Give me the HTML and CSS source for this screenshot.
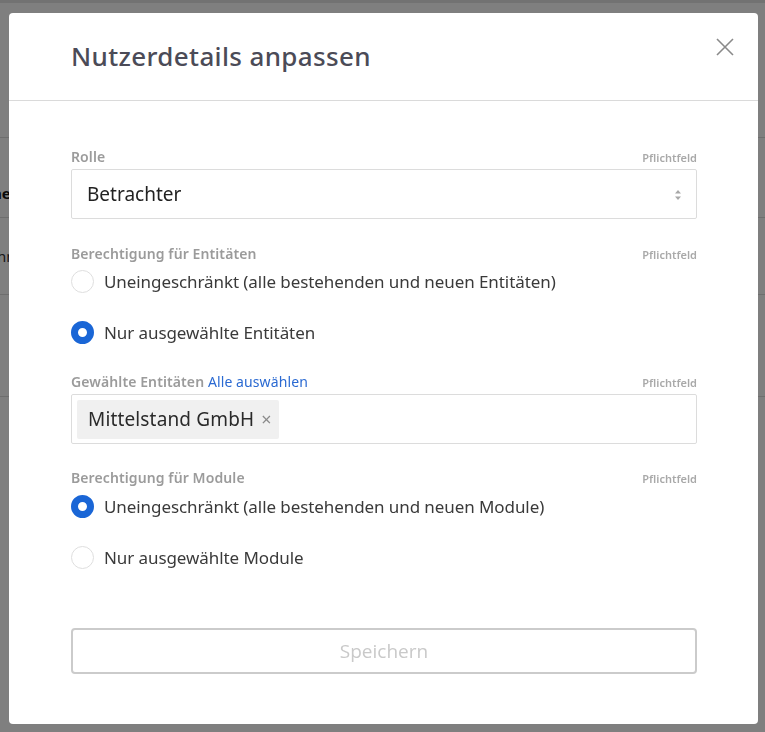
FILE: index.html
```html
<!DOCTYPE html>
<html lang="de">
<head>
<meta charset="utf-8">
<title>Nutzerdetails anpassen</title>
<link rel="stylesheet" href="styles.css">
</head>
<body>
<div class="page">
  <div class="page-top"></div>
  <div class="page-row page-row-first"></div>
  <div class="page-row page-row-head"><span class="cell-head">Name</span></div>
  <div class="page-row page-row-body"><span class="cell-body">Zahn</span></div>
  <div class="page-row page-row-tall"></div>
</div>
<div class="overlay"></div>
<div class="modal">
  <div class="modal-header">
    <h1 class="modal-title">Nutzerdetails anpassen</h1>
    <button class="close-btn" aria-label="Schließen">
      <svg width="18" height="18" viewBox="0 0 18 18"><path d="M1 1 L17 17 M17 1 L1 17" stroke="#8a8a8a" stroke-width="1.6" fill="none"/></svg>
    </button>
  </div>
  <div class="modal-body">
    <div class="field field-role">
      <div class="label-row"><span class="label">Rolle</span><span class="required">Pflichtfeld</span></div>
      <div class="box select-box">
        <span class="select-value">Betrachter</span>
        <svg class="select-arrows" width="8" height="12" viewBox="0 0 8 12"><path d="M4 1 L7 4.5 L1 4.5 Z M1 7.5 L7 7.5 L4 11 Z" fill="#a8a8a8"/></svg>
      </div>
    </div>

    <div class="field field-ent">
      <div class="label-row"><span class="label">Berechtigung für Entitäten</span><span class="required">Pflichtfeld</span></div>
      <div class="radios">
        <label class="radio-row"><span class="radio"></span><span class="radio-text">Uneingeschränkt (alle bestehenden und neuen Entitäten)</span></label>
        <label class="radio-row"><span class="radio radio-checked"></span><span class="radio-text">Nur ausgewählte Entitäten</span></label>
      </div>
    </div>

    <div class="field field-sel">
      <div class="label-row"><span class="label">Gewählte Entitäten <a class="link">Alle auswählen</a></span><span class="required">Pflichtfeld</span></div>
      <div class="box tag-box">
        <span class="chip"><span class="chip-text">Mittelstand GmbH</span><span class="chip-x">×</span></span>
      </div>
    </div>

    <div class="field field-mod">
      <div class="label-row"><span class="label">Berechtigung für Module</span><span class="required">Pflichtfeld</span></div>
      <div class="radios">
        <label class="radio-row"><span class="radio radio-checked"></span><span class="radio-text">Uneingeschränkt (alle bestehenden und neuen Module)</span></label>
        <label class="radio-row"><span class="radio"></span><span class="radio-text">Nur ausgewählte Module</span></label>
      </div>
    </div>

    <button class="save-btn" disabled>Speichern</button>
  </div>
</div>
</body>
</html>
```

FILE: styles.css
```css
html, body {
  margin: 0;
  padding: 0;
  height: 100%;
  overflow: hidden;
}
body {
  font-family: "Noto Sans", "Open Sans", sans-serif;
  background: #ffffff;
  color: #222;
}
.page {
  display: flex;
  flex-direction: column;
}
.page-top {
  height: 3px;
  background: #e4e4e4;
}
.page-row {
  border-bottom: 1px solid #dcdcdc;
  display: flex;
  align-items: center;
}
.page-row-first { height: 134px; }
.page-row-head { height: 79px; }
.page-row-body { height: 76px; }
.page-row-tall { height: 101px; }
.cell-head {
  font-weight: 700;
  font-size: 15px;
  margin-left: -34px;
  margin-top: 30px;
  color: #111;
}
.cell-body {
  font-size: 15px;
  margin-left: -20px;
  color: #333;
}
.overlay {
  position: fixed;
  inset: 0;
  background: rgba(0, 0, 0, 0.5);
}
.modal {
  position: fixed;
  left: 9px;
  top: 13px;
  width: 749px;
  height: 711px;
  background: #fff;
  border-radius: 4px;
  display: flex;
  flex-direction: column;
}
.modal-header {
  height: 87px;
  border-bottom: 1px solid #dadada;
  display: flex;
  align-items: center;
  justify-content: space-between;
  padding: 0 24px 0 62px;
  box-sizing: content-box;
}
.modal-title {
  margin: 0 0 2px 0;
  font-size: 26px;
  font-weight: 500;
  color: #4b4b57;
  letter-spacing: 0.35px;
}
.close-btn {
  border: 0;
  background: none;
  padding: 0;
  width: 18px;
  height: 18px;
  margin-top: -20px;
  cursor: pointer;
}
.modal-body {
  padding: 45px 61px 0 62px;
  display: flex;
  flex-direction: column;
}
.label-row {
  height: 20px;
  display: flex;
  justify-content: space-between;
  align-items: center;
}
.label {
  font-size: 14px;
  font-weight: 600;
  color: #9b9b9b;
  letter-spacing: 0.1px;
}
.link {
  color: #2b6ad2;
  font-weight: 400;
}
.required {
  font-size: 11px;
  font-weight: 600;
  color: #a9a9a9;
  padding-top: 2px;
}
.box {
  margin-top: 3px;
  height: 50px;
  box-sizing: border-box;
  border: 1px solid #dcdcdc;
  border-radius: 2px;
  display: flex;
  align-items: center;
}
.select-box {
  padding: 0 14px 0 15px;
  justify-content: space-between;
}
.select-value {
  font-size: 19px;
  color: #222;
}
.select-arrows {
  margin-top: 1px;
}
.tag-box {
  padding: 0 5px;
}
.chip {
  height: 39px;
  background: #f0f0f0;
  border-radius: 2px;
  display: flex;
  align-items: center;
  padding: 0 7px 0 11px;
}
.chip-text {
  font-size: 19px;
  color: #2a2a2a;
  letter-spacing: 0.15px;
}
.chip-x {
  font-size: 18px;
  color: #8a8a8a;
  margin-left: 7px;
}
.field-ent, .field-mod, .field-sel {
  margin-top: 24px;
}
.field-sel { margin-top: 27px; }
.field-mod { margin-top: 23px; }
.radios {
  display: flex;
  flex-direction: column;
  gap: 27px;
  margin-top: 6px;
}
.field-mod .radios { margin-top: 7px; }
.radio-row {
  height: 24px;
  display: flex;
  align-items: center;
  gap: 10px;
}
.radio {
  width: 23px;
  height: 23px;
  box-sizing: border-box;
  border-radius: 50%;
  border: 1px solid #dedede;
  flex: none;
}
.radio-checked {
  border: 7px solid #1a66d6;
  background: #fff;
}
.radio-text {
  font-size: 17px;
  color: #3a3a3a;
  letter-spacing: -0.08px;
}
.save-btn {
  margin-top: 59px;
  height: 46px;
  border: 2px solid #cbcbcb;
  border-radius: 4px;
  background: #fff;
  font-family: "Open Sans", "Noto Sans", sans-serif;
  font-size: 19px;
  color: #c9c9c9;
}
```
